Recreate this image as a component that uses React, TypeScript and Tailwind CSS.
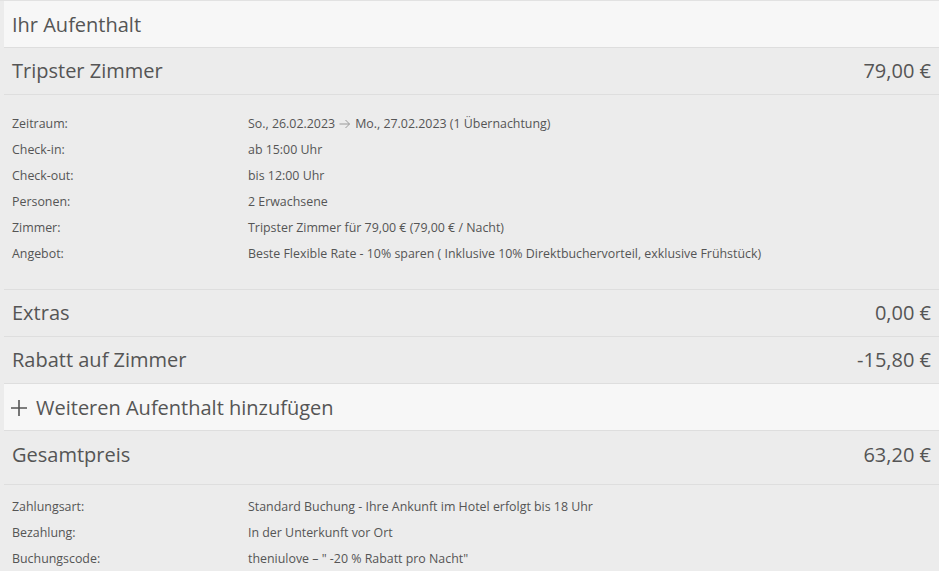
import React from 'react';

const font = { fontFamily: '"Open Sans", "Noto Sans", sans-serif' };

type Detail = { label: string; value: React.ReactNode };

function HeadRow({ title, price, light = false }: { title: React.ReactNode; price?: string; light?: boolean }) {
  return (
    <div
      className={`flex h-[47px] items-center justify-between border-b border-[#dedede] pl-2 pr-2 text-[20px] text-[#555] ${
        light ? 'bg-[#f7f7f7] pt-[1px]' : 'bg-[#ececec]'
      }`}
    >
      <span>{title}</span>
      {price && <span>{price}</span>}
    </div>
  );
}

function DetailRow({ d }: { d: Detail }) {
  return (
    <div className="flex h-[26px] items-center">
      <span className="w-[236px] shrink-0">{d.label}</span>
      <span>{d.value}</span>
    </div>
  );
}

export default function App() {
  const stay: Detail[] = [
    {
      label: 'Zeitraum:',
      value: (
        <span className="inline-flex items-center">
          So., 26.02.2023
          <svg width="12" height="10" viewBox="0 0 12 10" className="mx-[4px]">
            <path d="M0.5 5h10M6.5 1l4 4-4 4" fill="none" stroke="#9a9a9a" strokeWidth="1" />
          </svg>
          Mo., 27.02.2023 (1 Übernachtung)
        </span>
      ),
    },
    { label: 'Check-in:', value: 'ab 15:00 Uhr' },
    { label: 'Check-out:', value: 'bis 12:00 Uhr' },
    { label: 'Personen:', value: '2 Erwachsene' },
    { label: 'Zimmer:', value: 'Tripster Zimmer für 79,00 € (79,00 € / Nacht)' },
    { label: 'Angebot:', value: 'Beste Flexible Rate - 10% sparen ( Inklusive 10% Direktbuchervorteil, exklusive Frühstück)' },
  ];

  const payment: Detail[] = [
    { label: 'Zahlungsart:', value: 'Standard Buchung - Ihre Ankunft im Hotel erfolgt bis 18 Uhr' },
    { label: 'Bezahlung:', value: 'In der Unterkunft vor Ort' },
    { label: 'Buchungscode:', value: 'theniulove – " -20 % Rabatt pro Nacht"' },
  ];

  return (
    <div className="h-[571px] w-[939px] overflow-hidden border-t border-[#e2e2e2] bg-[#ececec] pl-1" style={font}>
      <HeadRow title="Ihr Aufenthalt" light />
      <HeadRow title="Tripster Zimmer" price="79,00 €" />
      <div className="h-[195px] border-b border-[#dedede] pl-2 pt-[16px] text-[12.4px] text-[#555]">
        {stay.map((d) => (
          <DetailRow key={d.label} d={d} />
        ))}
      </div>
      <HeadRow title="Extras" price="0,00 €" />
      <HeadRow title="Rabatt auf Zimmer" price="-15,80 €" />
      <HeadRow
        light
        title={
          <span className="flex items-center gap-[8px]">
            <svg width="18" height="18" viewBox="0 0 18 18" className="-ml-[2px]">
              <path d="M9 1v16M1 9h16" stroke="#555" strokeWidth="1.6" />
            </svg>
            Weiteren Aufenthalt hinzufügen
          </span>
        }
      />
      <div className="flex h-[54px] items-start justify-between border-b border-[#dedede] pl-2 pr-2 pt-[9px] text-[20px] text-[#555]">
        <span>Gesamtpreis</span>
        <span>63,20 €</span>
      </div>
      <div className="pl-2 pt-[9px] text-[12.4px] text-[#555]">
        {payment.map((d) => (
          <DetailRow key={d.label} d={d} />
        ))}
      </div>
    </div>
  );
}
